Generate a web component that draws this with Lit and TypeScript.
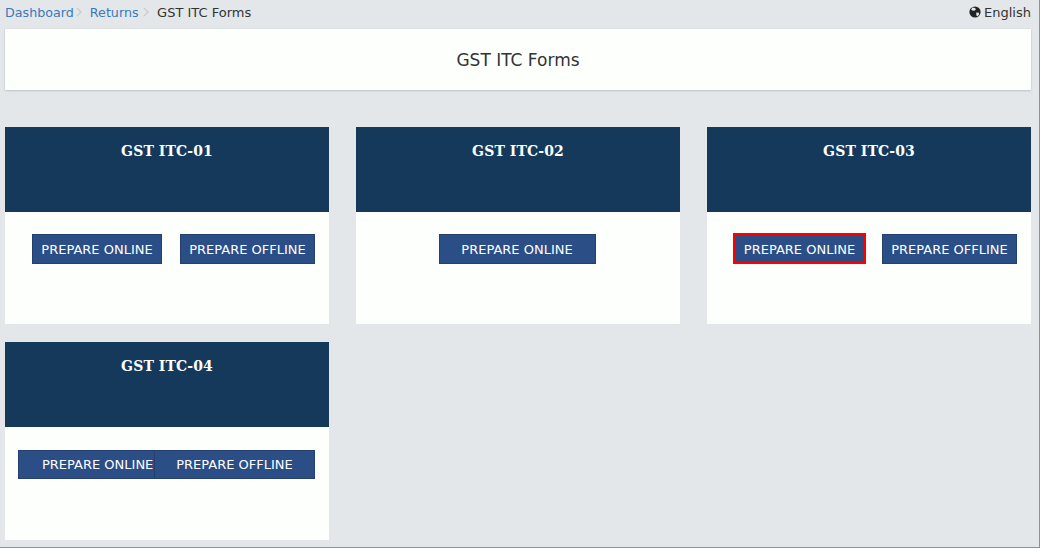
import { LitElement, html, css } from "lit";
import { customElement } from "lit/decorators.js";

@customElement("app-root")
export class AppRoot extends LitElement {
  static styles = css`
    :host { display: block; width: 1040px; height: 551px; background: #fff; font-family: "DejaVu Sans", Verdana, sans-serif; overflow: hidden; }
    .page { box-sizing: border-box; width: 1040px; height: 548px; background: #e3e7ea; border-right: 1px solid #14c4ca; border-bottom: 1px solid #14c4ca; padding: 0 8px 0 5px; }
    .crumbs { display: flex; justify-content: space-between; align-items: center; height: 24px; font-size: 13px; color: #333; }
    .trail { display: flex; align-items: center; }
    .trail a { color: #3a7ab8; font-size: 12.7px; }
    .sep { width: 16px; }
    .sep.wide { width: 18.5px; }
    .sep svg { display: block; margin-left: 2px; }
    .sep.wide svg { margin-left: 4px; }
    .lang { display: flex; align-items: center; gap: 3px; }
    .title { margin-top: 5px; height: 61px; background: #fdfffc; box-shadow: 0 1px 2px rgba(0,0,0,.14), 0 0 1px rgba(0,0,0,.12); display: flex; align-items: center; justify-content: center; font-size: 17px; color: #333; }
    .grid { margin-top: 37px; display: grid; grid-template-columns: repeat(3, 324px); column-gap: 27px; row-gap: 18px; }
    .card { background: #fdfffc; height: 197px; }
    .card.last { height: 198px; }
    .head { height: 85px; box-sizing: border-box; background: #14395b; color: #fff; font: bold 14px "DejaVu Serif", Georgia, serif; letter-spacing: .1px; text-align: center; padding-top: 16px; }
    .row { display: flex; justify-content: flex-end; align-items: flex-start; gap: 18px; padding: 22px 14px 0; }
    .row.center { justify-content: center; padding-left: 0; padding-right: 2px; }
    .row.focused { gap: 16px; }
    .row.tight { gap: 0; padding-top: 23px; padding-left: 0; }
    button { box-sizing: border-box; flex: none; height: 30px; background: #2c4e86; border: 1px solid #25406f; color: #fff; font: 13px "DejaVu Sans", Verdana, sans-serif; padding: 0; white-space: nowrap; }
    .w130 { width: 130px; } .w135 { width: 135px; } .w157 { width: 157px; }
    .focus { width: 133px; height: 31px; margin-top: -1px; padding-top: 1px; border: 2px solid #f00; }
    .c4a { width: 136px; height: 29px; padding-left: 23px; text-align: left; border-right: 0; }
    .c4b { width: 161px; height: 29px; }
  `;

  render() {
    const chevron = html`<svg width="7" height="10" viewBox="0 0 7 10"><path d="M1 1l4 4-4 4" fill="none" stroke="#ccc" stroke-width="1.4"/></svg>`;
    return html`<div class="page">
      <div class="crumbs">
        <div class="trail"><a>Dashboard</a><span class="sep">${chevron}</span><a>Returns</a><span class="sep wide">${chevron}</span><span>GST ITC Forms</span></div>
        <div class="lang">
          <svg width="12" height="12" viewBox="0 0 12 12"><circle cx="6" cy="6" r="5.6" fill="#222"/><path d="M3.5 1.6l2.6.5.8 1.5-1.6 1.2-2 -.4-1.2-1zM7.2 6.4l2.6.4.4 1.4-1.6 2-1.2-.8z" fill="#e3e7ea"/></svg>
          <span>English</span>
        </div>
      </div>
      <div class="title">GST ITC Forms</div>
      <div class="grid">
        <div class="card"><div class="head">GST ITC-01</div><div class="row"><button class="w130">PREPARE ONLINE</button><button class="w135">PREPARE OFFLINE</button></div></div>
        <div class="card"><div class="head">GST ITC-02</div><div class="row center"><button class="w157">PREPARE ONLINE</button></div></div>
        <div class="card"><div class="head">GST ITC-03</div><div class="row focused"><button class="focus">PREPARE ONLINE</button><button class="w135">PREPARE OFFLINE</button></div></div>
        <div class="card last"><div class="head">GST ITC-04</div><div class="row tight"><button class="c4a">PREPARE ONLINE</button><button class="c4b">PREPARE OFFLINE</button></div></div>
      </div>
    </div>`;
  }
}
